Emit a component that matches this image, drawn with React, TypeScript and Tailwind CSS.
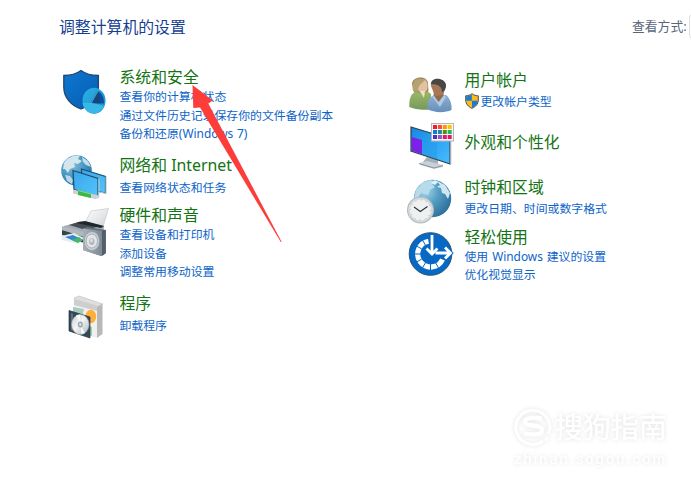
import React from "react";

type Entry = {
  title: string;
  links: string[];
  icon: React.ReactNode;
  box: string;
  head: string;
  shield?: boolean;
};

function SecurityIcon() {
  return (
    <svg className="h-[50px] w-[50px]" viewBox="60 67 50 50">
      <defs>
        <linearGradient id="sec" x1="0" y1="0" x2="1" y2="1">
          <stop offset="0" stopColor="#0d78cf" />
          <stop offset="1" stopColor="#075bb4" />
        </linearGradient>
        <linearGradient id="disc" x1="0" y1="0" x2="1" y2="1">
          <stop offset="0" stopColor="#2fb0e4" />
          <stop offset="1" stopColor="#1292cb" />
        </linearGradient>
      </defs>
      <path d="M81 70.5C77 73.5 70 75.500 63.800 75.500V87C63.800 98 71.500 105.500 81 109C90.500 105.500 98.400 98 98.400 87V75.500C92 75.500 85 73.500 81 70.500Z" fill="url(#sec)" stroke="#234767" strokeWidth="1.300" />
      <ellipse cx="94" cy="100.800" rx="11.500" ry="13" fill="url(#disc)" />
      <path d="M91.800 102.800L82.500 103C84 109 88 113.500 94 113.500C98 113.500 102 110.500 104.200 106Z" fill="#38b8e8" />
      <path d="M92 103L98.500 91.500C102.500 93.500 104 98 104 103.500Z" fill="#0c4fa0" />
      <path d="M92 103L98.500 91.500L100.500 103.500Z" fill="#174578" />
      <path d="M91 103L96.500 91" stroke="#4b87bd" strokeWidth="1" />
    </svg>
  );
}

function NetworkIcon() {
  return (
    <svg className="h-[48px] w-[50px]" viewBox="60 153 50 48">
      <defs>
        <radialGradient id="globe" cx="0.35" cy="0.3" r="0.8">
          <stop offset="0" stopColor="#83bfdf" />
          <stop offset="0.6" stopColor="#3f8fbd" />
          <stop offset="1" stopColor="#246b99" />
        </radialGradient>
        <linearGradient id="screen" x1="0" y1="0" x2="1" y2="1">
          <stop offset="0" stopColor="#37a6ec" />
          <stop offset="1" stopColor="#53c4fb" />
        </linearGradient>
      </defs>
      <circle cx="76.500" cy="170.500" r="15.300" fill="url(#globe)" />
      <path d="M67 159L73 156L80 155.500L78 159L82 161L78 164L74 163L75 167L70 169L68 173L65 169L63 169L64 163Z" fill="#d3e6ed" />
      <path d="M82 157L88 161L91 167L86 165L83 162Z" fill="#c4dde8" />
      <path d="M65 175L70 176L73 180L72 184L67 181Z" fill="#b9d7e4" />
      <path d="M81.500 169L105.500 176.500V193L82 188Z" fill="url(#screen)" stroke="#1c4f73" strokeWidth="1.200" />
      <path d="M106 176.500V193.500L100 192" fill="none" stroke="#bad2dd" />
      <path d="M73 170.500L98 178.500V196.500L74 189.500Z" fill="url(#screen)" stroke="#234b68" strokeWidth="1.200" />
      <path d="M98.900 178.500V197" stroke="#c8dae2" strokeWidth="1" />
      <path d="M73 189.500L99 195.500V198L95 199L73 193.500Z" fill="#ccd1d1" />
      <path d="M78 190L91 193.500V198L78 195Z" fill="#3eb64a" />
      <path d="M78 190.500L91 194" stroke="#80e184" />
    </svg>
  );
}

function DevicesIcon() {
  return (
    <svg className="h-[52px] w-[50px]" viewBox="60 206 50 52">
      <defs>
        <linearGradient id="spk" x1="0" y1="0" x2="1" y2="0">
          <stop offset="0" stopColor="#a8b1b9" />
          <stop offset="1" stopColor="#7d8994" />
        </linearGradient>
        <linearGradient id="sheet" x1="0" y1="0" x2="1" y2="1">
          <stop offset="0" stopColor="#ffffff" />
          <stop offset="1" stopColor="#cdd1d4" />
        </linearGradient>
      </defs>
      <path d="M85 223L91 211L108.500 208.500L102 230L84 227Z" fill="url(#sheet)" stroke="#c5c9cc" strokeWidth="0.700" />
      <path d="M64 226L83 221L104 226L103 239L84 242L62 233Z" fill="#a4abb1" />
      <path d="M69 225L80 221.500L100 226L86 230Z" fill="#464d53" />
      <path d="M76 223L85 221L104 226L101 228Z" fill="#1e272e" />
      <path d="M62 230L84 236V243L62 235Z" fill="#37424b" />
      <path d="M62 226L84 232V237L62 230Z" fill="#b1b8bd" />
      <path d="M61.500 236L74 233L84 238L78 244L61.500 240Z" fill="#e6edf1" />
      <path d="M65 237L73 235L79 238L76 242Z" fill="#3488cd" />
      <path d="M72 240L79 237L83 240L78 243Z" fill="#43b967" />
      <path d="M83 228.500L87 227L106 230V253L101 256L83 250Z" fill="#65717c" />
      <path d="M83 228.500L102 231V256L83 250Z" fill="url(#spk)" />
      <path d="M102 231L105.500 230V253.500L102 256Z" fill="#53606c" />
      <ellipse cx="91.800" cy="241" rx="7.700" ry="9.500" fill="#cbd0d3" stroke="#959da4" strokeWidth="0.800" />
      <ellipse cx="91.800" cy="241" rx="5.700" ry="7" fill="#e3e6e8" stroke="#9ba3a9" strokeWidth="0.800" />
      <ellipse cx="91.800" cy="241.500" rx="2.700" ry="3.500" fill="#afb7bc" />
      <ellipse cx="91.500" cy="240.500" rx="1.400" ry="2" fill="#dee1e3" />
    </svg>
  );
}

function ProgramsIcon() {
  return (
    <svg className="h-[48px] w-[50px]" viewBox="60 293 50 48">
      <defs>
        <linearGradient id="cd" x1="0" y1="0" x2="1" y2="1">
          <stop offset="0" stopColor="#c7d0d1" />
          <stop offset="0.450" stopColor="#f3f4f4" />
          <stop offset="1" stopColor="#aeb8bb" />
        </linearGradient>
      </defs>
      <path d="M74 298L79 296L103 304L97 307L75 301Z" fill="#dedede" stroke="#bfbfbf" strokeWidth="0.600" />
      <path d="M74 302L97 307V338L74 332Z" fill="#f0f0ef" />
      <path d="M97 307L102.500 304V334L97 338Z" fill="#b7b8b8" />
      <path d="M74 299L97 305.500V311L74 305Z" fill="#cecece" />
      <path d="M73 307L84 309L80 326L73 322Z" fill="#a8cdbd" />
      <path d="M85 325L92 327V336L83 334Z" fill="#a5ccb7" />
      <ellipse cx="90.800" cy="316.500" rx="5.400" ry="6.700" fill="#ffae3a" />
      <path d="M69 310.500L90 317V338L69 331Z" fill="#34495a" stroke="#263746" strokeWidth="0.700" />
      <path d="M71 313L73 314V331L71 330Z" fill="#60717e" />
      <ellipse cx="80.300" cy="324.500" rx="8.700" ry="10" fill="url(#cd)" stroke="#a7b2b6" strokeWidth="0.600" />
      <path d="M79.500 322L76 315.500L80 314.500ZM81 327L85 333L81.500 334Z" fill="#fff" />
      <ellipse cx="80.300" cy="324.500" rx="2.500" ry="3" fill="#98a5aa" />
      <ellipse cx="80.300" cy="324.500" rx="1.200" ry="1.400" fill="#dce2e4" />
    </svg>
  );
}

function UsersIcon() {
  return (
    <svg className="h-[40px] w-[50px]" viewBox="405 74 50 40">
      <defs>
        <linearGradient id="green" x1="0" y1="0" x2="0" y2="1">
          <stop offset="0" stopColor="#9fbb69" />
          <stop offset="1" stopColor="#76995a" />
        </linearGradient>
        <linearGradient id="blue" x1="0" y1="0" x2="0" y2="1">
          <stop offset="0" stopColor="#8fb1d5" />
          <stop offset="1" stopColor="#668eba" />
        </linearGradient>
      </defs>
      <path d="M409.300 107C409 98 411 93.500 416.500 91L426 90L431 94V109C424 111 414 109 409.300 107Z" fill="url(#green)" />
      <path d="M412 84C412 76 427 75 428 83L428.500 91L425 93L414 92Z" fill="#9a8356" />
      <ellipse cx="422.500" cy="86" rx="5.300" ry="7" fill="#e3c2a0" />
      <path d="M413 91C411 80 417 76 425 80C422 84 418 84 418 92Z" fill="#b5a172" />
      <path d="M420 91L425 91L424 98Z" fill="#efe1cd" />
      <path d="M427.500 109C427 102 429 97.500 434 95L446 95C450 98 452 104 451.500 110C445 113 434 113 427.500 109Z" fill="url(#blue)" />
      <path d="M434 91L443 91L444 97L438.500 103L433.500 96Z" fill="#8f6a4c" />
      <path d="M431 86C429 77 445 77 446 86L443 95L435 96Z" fill="#a67857" />
      <path d="M431 84C431 76.500 445 77 446 85C446 89 444 92 442 92C442 87 439 84 431 84Z" fill="#484746" />
      <path d="M433.500 95L438.500 102L444 95L446 97L440 107L432.500 97Z" fill="#afcae4" />
    </svg>
  );
}

function AppearanceIcon() {
  const colors = ["#f11e2f", "#fb4b31", "#ff9500", "#ffc400", "#0b7ed4", "#128eac", "#519600", "#16b965", "#4e31b9", "#9257ba", "#e51478", "#e7165e"];
  return (
    <svg className="h-[50px] w-[50px]" viewBox="405 121 50 50">
      <defs>
        <linearGradient id="monitor" x1="0" y1="0" x2="1" y2="1">
          <stop offset="0" stopColor="#1587e2" />
          <stop offset="1" stopColor="#46bdff" />
        </linearGradient>
      </defs>
      <path d="M427 157L438 160V164L431 166L423 162Z" fill="#a4b0b9" />
      <path d="M419.500 163L427 161L443 165V167L434 169L420 165Z" fill="#c9d1d6" />
      <path d="M419 163.500L434 168L443 165.500" fill="none" stroke="#87939c" />
      <path d="M411 127L450 139V164L411 151Z" fill="url(#monitor)" stroke="#304352" strokeWidth="1.200" />
      <path d="M450.300 138V164.500L451 164V137Z" fill="#bdc6cd" stroke="#9ba7b0" strokeWidth="0.500" />
      <path d="M411.700 137L422 140V154L411.700 150.500Z" fill="#7e21e6" />
      <path d="M423 140L437 144V159L423 154Z" fill="#209be9" opacity=".5" />
      <rect x="431.500" y="123.500" width="22" height="17.500" fill="#f8f8fa" stroke="#b6b6b8" />
      {colors.map((color, i) => (
        <rect key={color} x={433 + (i % 4) * 4.9} y={125 + Math.floor(i / 4) * 5} width="4" height="4" fill={color} />
      ))}
    </svg>
  );
}

function ClockIcon() {
  return (
    <svg className="h-[50px] w-[50px]" viewBox="405 176 50 50">
      <defs>
        <radialGradient id="world" cx="0.3" cy="0.3" r="0.8">
          <stop offset="0" stopColor="#a7d7eb" />
          <stop offset="0.450" stopColor="#569fc4" />
          <stop offset="1" stopColor="#2a6c99" />
        </radialGradient>
      </defs>
      <circle cx="432.500" cy="198.500" r="18.700" fill="url(#world)" />
      <path d="M416 190L422 183L430 180L435 181L432 184L435 187L430 190L428 195L421 193L418 198L414 198Z" fill="#b6dceb" />
      <path d="M436 180.500L445 185L450 193L448 199L445 194L442 193L441 188L437 187L440 185Z" fill="#d1e7f0" />
      <path d="M431 183L435 180L438 182L435 185Z" fill="#e3f0f4" />
      <circle cx="420.500" cy="210" r="13.500" fill="#b2babd" />
      <circle cx="420.500" cy="210" r="12.500" fill="#d3d8da" />
      <circle cx="420.500" cy="210" r="10.600" fill="#eff0f0" />
      <path d="M414 207L420.300 211.500L427.500 206.500" fill="none" stroke="#28323a" strokeWidth="1.100" />
      <circle cx="420.500" cy="210" r="10" fill="none" stroke="#949ea3" strokeWidth="1" strokeDasharray="0.7 4.536" />
    </svg>
  );
}

function EaseIcon() {
  return (
    <svg className="h-[48px] w-[50px]" viewBox="405 230 50 48">
      <circle cx="430.500" cy="254" r="21.300" fill="#0869c4" stroke="#26537a" strokeWidth="1" />
      <path d="M428.500 241.200A13 13 0 1 0 442.500 259.500" fill="none" stroke="#fff" strokeWidth="5.200" />
      <path d="M435.500 262.700L438.500 267.900M430.500 263.500V270M425.500 262.700L422.500 267.900M421.800 259L416.600 262M421 254H414M421.800 249L416.600 246M425.500 245.300L422.500 240.100" stroke="#0869c4" strokeWidth="1" />
      <path d="M432 234V252M426 248L432 254L438 248" fill="none" stroke="#0869c4" strokeWidth="4.600" />
      <path d="M432 235V253.500M426.500 248.500L432 254L437.500 248.500" fill="none" stroke="#fff" strokeWidth="2.800" />
      <path d="M437 253H449M444.500 247L450.500 253L444.500 259" fill="none" stroke="#0869c4" strokeWidth="4.600" />
      <path d="M435.500 253H450M445 247.500L450.500 253L445 258.500" fill="none" stroke="#fff" strokeWidth="2.800" />
    </svg>
  );
}

function UacShield() {
  return (
    <svg className="mr-[2px] h-4 w-[14px] shrink-0" viewBox="0 0 14 16">
      <path d="M7 .7C5 2.200 3 2.800 .7 2.800V7C.7 11 3.500 14 7 15.300C10.500 14 13.300 11 13.300 7V2.800C11 2.800 9 2.200 7 .7Z" fill="#ffba19" stroke="#44515c" />
      <path d="M6.800 1.500V7.800H1.200V3.300C3.500 3.300 5.200 2.700 6.800 1.500Z" fill="#167ed5" />
      <path d="M7 7.800H12.800C12.500 11 10.500 13.500 7 14.800Z" fill="#167ed5" />
    </svg>
  );
}

const left: Entry[] = [
  { title: "系统和安全", links: ["查看你的计算机状态", "通过文件历史记录保存你的文件备份副本", "备份和还原(Windows 7)"], icon: <SecurityIcon />, box: "h-[88px]", head: "h-[20px]" },
  { title: "网络和 Internet", links: ["查看网络状态和任务"], icon: <div className="-mt-[2px]"><NetworkIcon /></div>, box: "h-[50px]", head: "h-[22.500px]" },
  { title: "硬件和声音", links: ["查看设备和打印机", "添加设备", "调整常用移动设置"], icon: <div className="mt-px"><DevicesIcon /></div>, box: "h-[88px]", head: "h-[20px]" },
  { title: "程序", links: ["卸载程序"], icon: <ProgramsIcon />, box: "h-[49px]", head: "h-[22.500px]" },
];

const right: Entry[] = [
  { title: "用户帐户", links: ["更改帐户类型"], icon: <div className="mt-1"><UsersIcon /></div>, box: "h-[62px]", head: "h-[22.200px]", shield: true },
  { title: "外观和个性化", links: [], icon: <div className="-mt-[11px]"><AppearanceIcon /></div>, box: "h-[45px]", head: "h-5" },
  { title: "时钟和区域", links: ["更改日期、时间或数字格式"], icon: <div className="-mt-px"><ClockIcon /></div>, box: "h-[50px]", head: "h-[22px]" },
  { title: "轻松使用", links: ["使用 Windows 建议的设置", "优化视觉显示"], icon: <div className="mt-[3px]"><EaseIcon /></div>, box: "h-[60px]", head: "h-[19.700px]" },
];

function Category({ item }: { item: Entry }) {
  return (
    <div className={`flex ${item.box}`}>
      <div className="w-[59.500px] shrink-0">{item.icon}</div>
      <div className="whitespace-nowrap">
        <h2 className={`${item.head} text-[15.850px] leading-5 text-[#137414]`}>{item.title}</h2>
        {item.links.map((link) => (
          <a key={link} className="flex h-[18.600px] items-center text-[11.880px] leading-[18.600px] text-[#0d64c8]">
            {item.shield && <UacShield />}
            <span className="[word-spacing:0.8px]">{link}</span>
          </a>
        ))}
      </div>
    </div>
  );
}

export default function App() {
  return (
    <main className="relative flex h-[494px] w-[691px] flex-col overflow-hidden bg-white font-['Noto_Sans','Noto_Sans_CJK_SC',sans-serif]">
      <header className="flex h-[67px] shrink-0 items-start justify-between pl-[59px] pt-[14px]">
        <h1 className="mt-[3px] text-[15.850px] leading-5 text-[#173f91]">调整计算机的设置</h1>
        <div className="flex w-[59px] whitespace-nowrap text-[#596579]">
          <span className="mt-[2px] w-[57px] shrink-0 text-[12.800px] leading-5">查看方式:</span>
          <div className="h-[25px] w-3 shrink-0 rounded-l-sm border border-[#dedede]" />
        </div>
      </header>
      <div className="flex pl-[60px]">
        <section className="w-[345px]">{left.map((item) => <Category key={item.title} item={item} />)}</section>
        <section className="pt-[3px]">{right.map((item) => <Category key={item.title} item={item} />)}</section>
      </div>
      <svg className="pointer-events-none absolute left-[185px] top-[80px] h-[170px] w-[105px]" viewBox="185 80 105 170">
        <path d="M192.500 85L212.800 100.500L208.300 103.500L281.700 242L280.800 242L200 107.500L193.300 108Z" fill="#fc3d39" />
      </svg>
      <div className="absolute left-[514px] top-[408px] w-[165px] text-white [filter:drop-shadow(0_0_2px_#e2e2e2)]">
        <div className="flex h-[38px] items-center">
          <svg className="h-[38px] w-[38px] shrink-0" viewBox="0 0 38 38">
            <path d="M29 33A17 17 0 1 1 34.500 26" fill="none" stroke="white" strokeWidth="3" />
            <path d="M28 11C23 9 11 9 11 14C11 19 28 16 28 22C28 28 15 27 10 25" fill="none" stroke="white" strokeWidth="4.500" />
            <path d="M31 33L34 29" stroke="white" strokeWidth="3" />
          </svg>
          <span className="ml-[3px] whitespace-nowrap text-[28px] font-medium leading-9">搜狗指南</span>
        </div>
        <div className="mt-1 whitespace-nowrap font-['Roboto',sans-serif] text-[14.500px] font-medium leading-5 tracking-[2.100px]">zhinan.sogou.com</div>
      </div>
    </main>
  );
}
